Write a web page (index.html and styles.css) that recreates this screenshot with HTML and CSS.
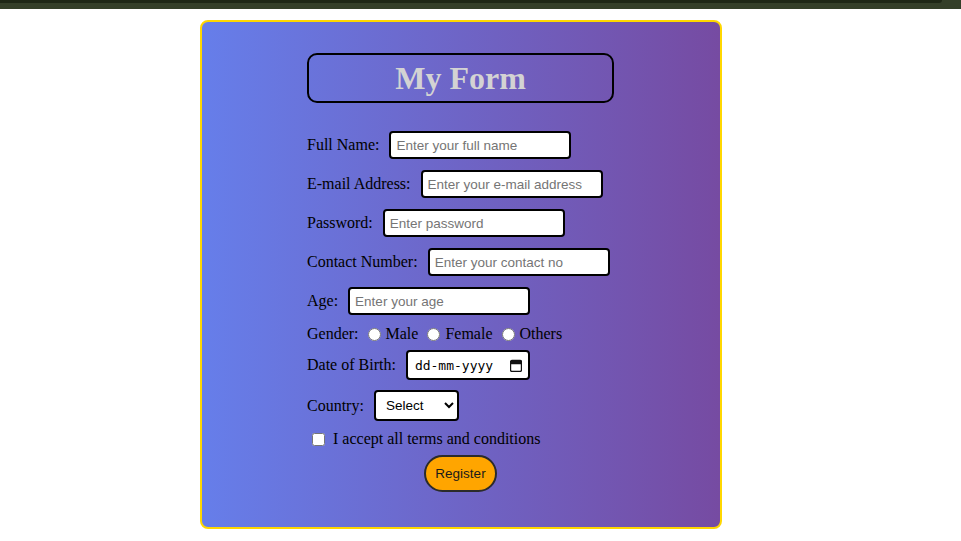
FILE: index.html
```html
<!DOCTYPE html>
<html>
<head>
<meta charset="utf-8">
<link rel="stylesheet" href="styles.css">
</head>
<body>
<div class="topbar"><div class="topbar-inner"></div></div>
<div class="page">
  <div class="card">
    <form class="form">
      <h1 class="title">My Form</h1>
      <div class="row"><label>Full Name:</label><input class="field" type="text" placeholder="Enter your full name"></div>
      <div class="row"><label>E-mail Address:</label><input class="field" type="email" placeholder="Enter your e-mail address"></div>
      <div class="row"><label>Password:</label><input class="field" type="password" placeholder="Enter password"></div>
      <div class="row"><label>Contact Number:</label><input class="field" type="text" placeholder="Enter your contact no"></div>
      <div class="row"><label>Age:</label><input class="field" type="text" placeholder="Enter your age"></div>
      <div class="row row-gender"><span class="lbl">Gender:</span>
        <input type="radio" name="g" class="radio"><span>Male</span>
        <input type="radio" name="g" class="radio"><span>Female</span>
        <input type="radio" name="g" class="radio"><span>Others</span>
      </div>
      <div class="row row-date"><label>Date of Birth:</label>
        <div class="field date">
          <input class="date-text" type="text" placeholder="dd-mm-yyyy">
          <svg class="cal" width="12" height="13" viewBox="0 0 12 13"><path d="M2 1.5h8a1.5 1.5 0 0 1 1.5 1.5v8a1.5 1.5 0 0 1-1.5 1.5H2A1.5 1.5 0 0 1 .5 11V3A1.5 1.5 0 0 1 2 1.5z M.5 4.5h11" fill="none" stroke="#111" stroke-width="1.4"/><rect x="1" y="2" width="10" height="2.5" fill="#111"/></svg>
        </div>
      </div>
      <div class="row row-country"><label>Country:</label>
        <select class="field select"><option>Select</option></select>
      </div>
      <div class="row row-check"><input type="checkbox" class="check"><span>I accept all terms and conditions</span></div>
      <div class="row row-btn"><button type="button" class="btn">Register</button></div>
    </form>
  </div>
</div>
</body>
</html>
```
FILE: styles.css
```css
html, body {
  margin: 0;
  padding: 0;
  background: #ffffff;
  font-family: "Liberation Serif", "Times New Roman", serif;
  font-size: 16px;
  color: #000;
}
.topbar {
  height: 9px;
  background: #343f29;
}
.topbar-inner {
  height: 3px;
  width: 942px;
  background: #1e2716;
  border-bottom-right-radius: 3px;
}
.page {
  padding: 11px 0 0 200px;
}
.card {
  width: 518px;
  height: 505px;
  border: 2px solid #ffd700;
  border-radius: 8px;
  background: linear-gradient(to right, #667eea, #764ba2);
  box-sizing: content-box;
}
.form {
  width: 307px;
  margin: 31px 0 0 105px;
  display: flex;
  flex-direction: column;
}
.title {
  margin: 0 0 28px;
  height: 46px;
  border: 2px solid #000;
  border-radius: 10px;
  text-align: center;
  font-size: 32px;
  line-height: 46px;
  font-weight: bold;
  color: #d3d3d3;
}
.row {
  display: flex;
  align-items: center;
  margin-bottom: 11px;
  white-space: nowrap;
}
.row label, .row .lbl {
  margin-right: 10px;
}
.field {
  width: 182px;
  height: 28px;
  box-sizing: border-box;
  border: 2px solid #000;
  border-radius: 4px;
  padding: 0 5px;
  font-family: "Liberation Sans", Arial, sans-serif;
  font-size: 13.5px;
  background: #fff;
}
.field::placeholder {
  color: #757575;
}
.row-gender {
  height: 18px;
  margin-top: -1px;
  margin-bottom: 7px;
}
.row-gender .lbl { margin-right: 0; }
.radio {
  width: 13px;
  height: 13px;
  margin: 0 5px 0 9px;
}
.date {
  width: 124px;
  height: 30px;
  display: flex;
  align-items: center;
  padding: 0 6px 0 7px;
}
.date-text {
  flex: 1;
  min-width: 0;
  border: 0;
  padding: 0;
  outline: none;
  font-family: "DejaVu Sans Mono", monospace;
  font-size: 13px;
  background: transparent;
}
.date-text::placeholder {
  color: #000;
}
.cal {
  flex: none;
}
.row-date { margin-bottom: 10px; }
.select {
  width: 85px;
  height: 31px;
  padding: 0 4px 0 6px;
  color: #000;
}
.row-country { margin-bottom: 9px; }
.row-check {
  height: 16px;
  margin-top: 1px;
  margin-bottom: 8px;
}
.check {
  width: 13px;
  height: 13px;
  margin: 0 8px 0 5px;
}
.row-btn {
  justify-content: center;
  margin-bottom: 0;
}
.btn {
  width: 73px;
  height: 37px;
  background: #ffa500;
  border: 2px solid #2b2b2b;
  border-radius: 19px;
  font-family: "Liberation Sans", Arial, sans-serif;
  font-size: 13.5px;
  color: #1a1a1a;
  padding: 0;
}
```
